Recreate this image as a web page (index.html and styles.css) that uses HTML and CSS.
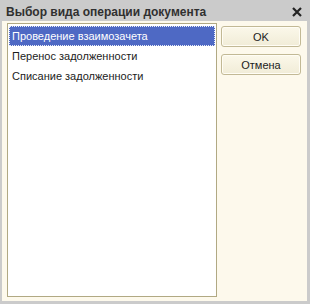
FILE: index.html
```html
<!DOCTYPE html>
<html lang="ru">
<head>
  <meta charset="UTF-8">
  <title>Выбор вида операции документа</title>
  <link rel="stylesheet" href="styles.css">
</head>
<body>
  <div class="window">
    <div class="titlebar">
      <span class="title">Выбор вида операции документа</span>
      <svg class="close" width="10" height="10" viewBox="0 0 10 10">
        <path d="M1 1 L9 9 M9 1 L1 9" stroke="#222" stroke-width="2.2" />
      </svg>
    </div>
    <div class="frame">
      <ul class="list">
        <li class="item selected">Проведение взаимозачета</li>
        <li class="item">Перенос задолженности</li>
        <li class="item">Списание задолженности</li>
      </ul>
      <div class="buttons">
        <button class="btn">OK</button>
        <button class="btn">Отмена</button>
      </div>
    </div>
  </div>
</body>
</html>
```

FILE: styles.css
```css
:root {
  --gray: #cbcbcb;
  --cream: #fdf9ec;
  --khaki: #b1a983;
  --select: #4e69c4;
  --text: #1c1c1c;
}

html, body {
  margin: 0;
  padding: 0;
}

.window {
  width: 310px;
  height: 304px;
  box-sizing: border-box;
  background: var(--gray);
  padding: 0 3px 3px 2px;
  display: flex;
  flex-direction: column;
  font-family: "Liberation Sans", Arial, sans-serif;
}

.titlebar {
  height: 21px;
  box-sizing: border-box;
  display: flex;
  align-items: center;
  justify-content: space-between;
  padding: 2px 5px 0 4px;
}

.title {
  font-weight: bold;
  font-size: 12px;
  color: #303030;
}

.frame {
  flex: 1;
  background: var(--cream);
  display: flex;
  padding: 2px 5px 4px 5px;
  gap: 4px;
}

.list {
  list-style: none;
  margin: 0;
  padding: 2px 1px;
  width: 210px;
  box-sizing: border-box;
  background: #fff;
  border: 1px solid var(--khaki);
}

.item {
  height: 20px;
  line-height: 20px;
  padding-left: 3px;
  font-size: 11px;
  color: var(--text);
}

.selected {
  background: var(--select);
  color: #fff;
  outline: 1px dotted #e8ecf8;
  outline-offset: -1px;
}

.buttons {
  display: flex;
  flex-direction: column;
  gap: 7px;
  padding-top: 3px;
}

.btn {
  width: 80px;
  height: 21px;
  padding: 0;
  font-family: inherit;
  font-size: 11px;
  color: var(--text);
  background: linear-gradient(#fbf8ea, #f1ecd7);
  border: 1px solid #c2b995;
  border-radius: 3px;
  box-shadow: inset 0 0 0 1px #fffdf5;
}
```
